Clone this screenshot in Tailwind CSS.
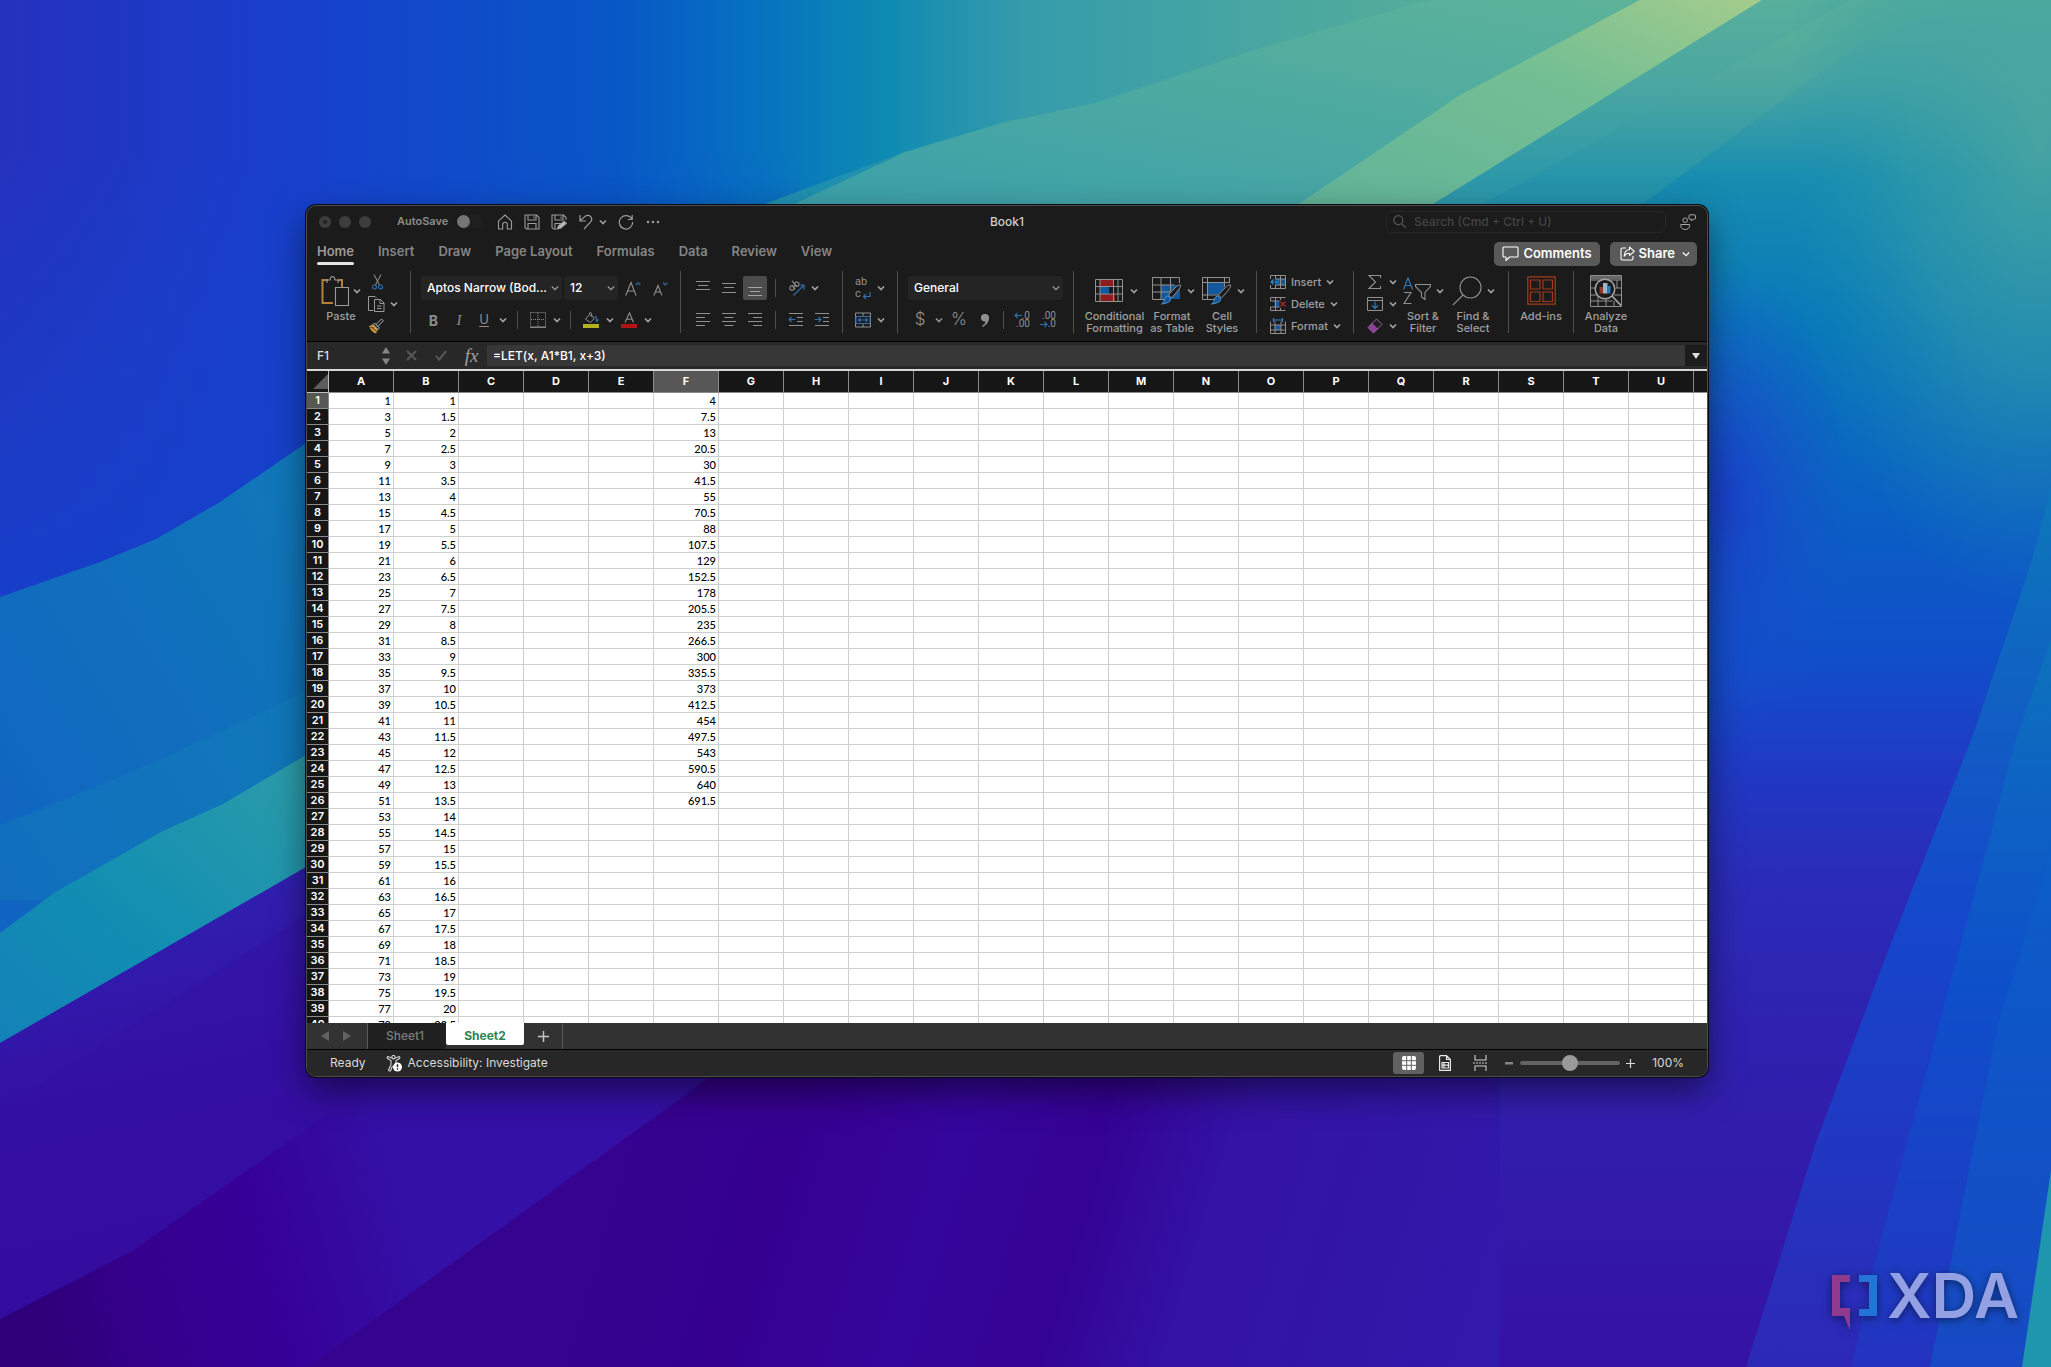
<!DOCTYPE html>
<html lang="en">
<head>
  <meta charset="UTF-8">
  <title>Book1</title>
  <meta name="viewport" content="width=device-width, initial-scale=1" />
  <script src="https://cdn.jsdelivr.net/npm/@tailwindcss/browser@4"></script>
</head>
<body class="relative h-screen overflow-hidden bg-[#2c22b0] font-['Inter','Liberation_Sans',sans-serif] text-[#a0a0a0]">

  <!-- Desktop wallpaper -->
  <svg class="absolute inset-0 h-full w-full" viewBox="0 0 2051 1367" preserveAspectRatio="none" aria-hidden="true">
    <defs>
      <linearGradient id="sky" x1="0" y1="0" x2="1" y2="0">
        <stop offset="0" stop-color="#2632be" />
        <stop offset=".15" stop-color="#1740cc" />
        <stop offset=".3" stop-color="#0857c6" />
        <stop offset=".37" stop-color="#0672c0" />
        <stop offset=".43" stop-color="#0d8ab2" />
        <stop offset=".5" stop-color="#369cab" />
        <stop offset=".7" stop-color="#55ae9a" />
        <stop offset="1" stop-color="#55ae9a" />
      </linearGradient>
      <linearGradient id="skyfade" x1="0" y1="0" x2="0" y2="1">
        <stop offset="0" stop-color="#1245cc" stop-opacity="0" />
        <stop offset="1" stop-color="#163fca" />
      </linearGradient>
      <linearGradient id="green" x1="0" y1="1" x2="1" y2="0">
        <stop offset="0" stop-color="#3a9faa" />
        <stop offset="1" stop-color="#60b598" />
      </linearGradient>
      <linearGradient id="lime" x1="0" y1="1" x2="1" y2="0">
        <stop offset="0" stop-color="#60b299" />
        <stop offset=".6" stop-color="#74bf93" />
        <stop offset="1" stop-color="#a4cc8c" />
      </linearGradient>
      <linearGradient id="right" x1="0" y1="0" x2="0" y2="1">
        <stop offset="0" stop-color="#5db299" />
        <stop offset=".06" stop-color="#48a5a2" />
        <stop offset=".13" stop-color="#178db0" />
        <stop offset=".24" stop-color="#0878ba" />
        <stop offset=".38" stop-color="#0a5ec4" />
        <stop offset=".48" stop-color="#104fca" />
        <stop offset=".56" stop-color="#1f3ac4" />
        <stop offset=".64" stop-color="#2a2cb8" />
        <stop offset=".75" stop-color="#2f22b0" />
        <stop offset="1" stop-color="#3512a4" />
      </linearGradient>
      <linearGradient id="leftblue" x1="0" y1="1" x2="1" y2="0">
        <stop offset="0" stop-color="#1160c4" />
        <stop offset="1" stop-color="#107cb6" />
      </linearGradient>
      <linearGradient id="leftteal" x1="0" y1="1" x2="1" y2="0">
        <stop offset="0" stop-color="#1480b8" />
        <stop offset=".4" stop-color="#118eb2" />
        <stop offset="1" stop-color="#319fa8" />
      </linearGradient>
      <linearGradient id="purple" x1="0" y1="0" x2=".45" y2="1">
        <stop offset="0" stop-color="#2c2ab8" />
        <stop offset=".45" stop-color="#3410a4" />
        <stop offset="1" stop-color="#350498" />
      </linearGradient>
      <linearGradient id="violet" gradientUnits="userSpaceOnUse" x1="60" y1="1367" x2="420" y2="1270">
        <stop offset="0" stop-color="#2e007a" />
        <stop offset=".3" stop-color="#36008e" />
        <stop offset=".6" stop-color="#360098" />
        <stop offset="1" stop-color="#3410a6" />
      </linearGradient>
      <linearGradient id="streak" gradientUnits="userSpaceOnUse" x1="500" y1="1200" x2="1500" y2="1500">
        <stop offset="0" stop-color="#35048f" />
        <stop offset=".25" stop-color="#350090" />
        <stop offset=".4" stop-color="#35069c" />
        <stop offset=".53" stop-color="#340294" />
        <stop offset=".66" stop-color="#3313a5" />
        <stop offset="1" stop-color="#311aac" />
      </linearGradient>
      <linearGradient id="edge1" x1="0" y1="1" x2="0" y2="0">
        <stop offset="0" stop-color="#2d28b6" />
        <stop offset=".5" stop-color="#1546cc" />
        <stop offset="1" stop-color="#0c78ba" />
      </linearGradient>
      <linearGradient id="edge2" x1="0" y1="1" x2="0" y2="0">
        <stop offset="0" stop-color="#1f38c4" />
        <stop offset=".5" stop-color="#0a54ca" />
        <stop offset="1" stop-color="#0c78ba" />
      </linearGradient>
      <radialGradient id="tealglow">
        <stop offset="0" stop-color="#4ea89f" stop-opacity=".8" />
        <stop offset=".5" stop-color="#3a9fa5" stop-opacity=".5" />
        <stop offset="1" stop-color="#1a90b0" stop-opacity="0" />
      </radialGradient>
      <radialGradient id="blueglow">
        <stop offset="0" stop-color="#1a40ca" />
        <stop offset="1" stop-color="#1a50ca" stop-opacity="0" />
      </radialGradient>
    </defs>
    <rect width="2051" height="700" fill="url(#sky)" />
    <rect y="150" width="800" height="500" fill="url(#skyfade)" />
    <path d="M760 206 905 152 1005 122 1095 103 1270 45 1430 0H1800L1430 210Z" fill="url(#green)" />
    <path d="M760 206 905 152 790 206Z" fill="#1f90b0" />
    <path d="M1290 210 1460 95 1640 0H1765L1430 210Z" fill="url(#lime)" />

    <!-- Right side -->
    <path d="M1762 0H2051V1367H1000V1060H1300L1430 206Z" fill="url(#right)" />
    <path d="M1762 0H1850L1480 206H1430Z" fill="#50a99f" opacity=".4" />
    <path d="M1960 0 1850 50 1640 206H1480L1850 0Z" fill="#6ab896" opacity=".18" />
    <ellipse cx="2040" cy="150" rx="260" ry="460" fill="url(#tealglow)" />
    <ellipse cx="1720" cy="500" rx="130" ry="240" fill="url(#blueglow)" />

    <!-- Left bands -->
    <path d="M0 597 100 562 156 539 220 502 306 443H420V1100H0Z" fill="url(#leftblue)" />
    <path d="M0 825Q170 760 306 690V900H0Z" fill="#1284b6" opacity=".35" />
    <path d="M0 933 54 893 161 832 223 804 306 755 340 740V900L0 1060Z" fill="url(#leftteal)" />
    <path d="M0 1043 306 867 400 813H1100V1367H0Z" fill="url(#purple)" />
    <path d="M0 1110 306 915 420 850V1078L0 1330Z" fill="#3410a2" opacity=".4" />

    <!-- Bottom -->
    <path d="M0 1319 134 1250 379 1078H1300V1367H0Z" fill="url(#violet)" />
    <path d="M308 1367 720 1070H1500V1367Z" fill="url(#streak)" />

    <!-- Right edge bands -->
    <path d="M2051 490 2032 560 1973 735 1888 951 1816 1142 1746 1367H2051Z" fill="url(#edge1)" />
    <path d="M2051 640 2016 740 1935 1040 1870 1280 1852 1367H2051Z" fill="url(#edge2)" opacity=".7" />
    <path d="M2051 840 2046 869 1998 1023 1937 1332 1930 1367H2051Z" fill="#0c5fc8" opacity=".5" />
    <path d="M2051 1170 2022 1367H2051Z" fill="#1d96ae" />
  </svg>

  <!-- Shared icons -->
  <svg class="hidden" aria-hidden="true">
    <symbol id="chev" viewBox="0 0 8 8"><path d="M1 2.5 4 5.5 7 2.5" fill="none" stroke="currentColor" stroke-width="1.7" /></symbol>
    <symbol id="thin-chev" viewBox="0 0 8 8"><path d="M.8 2.5 4 5.7 7.2 2.5" fill="none" stroke="currentColor" stroke-width="1.1" /></symbol>
  </svg>

  <main class="relative flex h-full flex-col pt-[205px] pr-[343px] pb-[290px] pl-[306px]">
    <div class="flex min-h-0 flex-1 flex-col overflow-hidden rounded-[10px] border border-[#4c4c4c] bg-[#1b1b1b] shadow-[0_0_0_1px_#0a0a14,0_14px_34px_rgba(0,0,0,0.5)]">

      <!-- Title bar -->
      <header class="grid h-[31px] shrink-0 grid-cols-[1fr_auto_1fr] items-center">
        <div class="flex items-center pl-3">
          <div class="flex gap-2">
            <button aria-label="Close" class="grid size-3 place-items-center rounded-full bg-[#3d3d3d]"><span class="size-1 rounded-full bg-[#222]"></span></button>
            <button aria-label="Minimize" class="size-3 rounded-full bg-[#3d3d3d]"></button>
            <button aria-label="Zoom" class="size-3 rounded-full bg-[#3d3d3d]"></button>
          </div>
          <label for="autosave" class="ml-[26px] text-[11px] font-semibold text-[#8c8c8c]">AutoSave</label>
          <input id="autosave" type="checkbox" class="ml-[9px] h-[13px] w-[26px] appearance-none rounded-full bg-[#1f1f1f] before:block before:size-[13px] before:rounded-full before:bg-[#757575]" />
          <div class="ml-2 flex items-center text-[#9a9a9a]">
            <button aria-label="Home" class="grid w-[27px] place-items-center">
              <svg class="size-4" viewBox="0 0 16 16" fill="none" stroke="currentColor" stroke-width="1.1"><path d="M1.5 7.2 8 1l6.500 6.200V15H10.300V10.500a2.300 2.300 0 0 0-4.600 0V15H1.500Z" stroke-linejoin="round" /></svg>
            </button>
            <button aria-label="Save" class="grid w-[27px] place-items-center">
              <svg class="size-4" viewBox="0 0 16 16" fill="none" stroke="currentColor" stroke-width="1.1"><path d="M1 1h11.500L15 3.500V15H2.500L1 13.500ZM4 1v5h8V1M4 15V9.500h8V15M10 2.500v2" /></svg>
            </button>
            <button aria-label="Save as" class="grid w-[27px] place-items-center">
              <svg class="size-4" viewBox="0 0 16 16" fill="none" stroke="currentColor" stroke-width="1.1"><path d="M5.500 15H2.500L1 13.500V1h11.500L15 3.500V6M4 1v5h8V1M4 15V9.500h6M10 2.500v2" /><path d="m6.500 15 .8-3L13 7.200l2.500 2L10 14Z" fill="#bdbdbd" /></svg>
            </button>
            <button aria-label="Undo" class="grid w-[27px] place-items-center">
              <svg class="size-4" viewBox="0 0 16 16" fill="none" stroke="currentColor" stroke-width="1.200"><path d="M2 1v6h6M2.200 6.800 7 2.400c2-1.800 5-1.200 6.200.8 1 1.800.5 3.600-.8 4.900L6 15" /></svg>
            </button>
            <button aria-label="Undo history" class="w-[10px]"><svg class="size-2"><use href="#chev" /></svg></button>
            <button aria-label="Redo" class="ml-[3px] grid w-[27px] place-items-center">
              <svg class="size-4" viewBox="0 0 16 16" fill="none" stroke="currentColor" stroke-width="1.200"><path d="M14.200 1v4.500H9.800M14 5.300A6.700 6.700 0 1 0 14.700 8" /></svg>
            </button>
            <button aria-label="More" class="grid w-[27px] place-items-center">
              <svg class="h-1 w-[14px]" viewBox="0 0 14 4" fill="currentColor"><circle cx="2" cy="2" r="1.300" /><circle cx="7" cy="2" r="1.300" /><circle cx="12" cy="2" r="1.300" /></svg>
            </button>
          </div>
        </div>
        <h1 class="text-[12px] font-medium text-[#cfcfcf]">Book1</h1>
        <div class="flex items-center justify-end gap-[14px] pr-[11px]">
          <label class="flex h-[22px] w-[280px] items-center gap-2 rounded-[5px] border border-[#272727] px-[6px] text-[#5e5e5e]">
            <svg class="size-[13px] shrink-0" viewBox="0 0 13 13" fill="none" stroke="currentColor" stroke-width="1.100"><circle cx="5.300" cy="5.300" r="4.500" /><path d="m8.600 8.600 4 4" /></svg>
            <input type="search" aria-label="Search" placeholder="Search (Cmd + Ctrl + U)" class="w-full bg-transparent text-[12px] font-medium outline-none placeholder:text-[#434343]" />
          </label>
          <button aria-label="Account" class="text-[#a8a8a8]">
            <svg class="size-4" viewBox="0 0 16 16" fill="none" stroke="currentColor" stroke-width="1"><circle cx="5.200" cy="6.200" r="2.300" /><path d="M.8 10.500h8.800v1.200c0 2.400-2 3.800-4.400 3.800S.8 14.100.8 11.700ZM10 .8h4.500q1 0 1 1v2.400q0 1-1 1h-1.300l-1.700 1.600V5.200H10q-1 0-1-1V1.800q0-1 1-1Z" /></svg>
          </button>
        </div>
      </header>

      <!-- Ribbon tabs -->
      <div class="flex h-[30px] shrink-0 items-center justify-between pr-[10px] pl-[10px]">
        <nav class="flex h-full items-center gap-6 text-[13px] font-semibold text-[#858585]">
          <a href="#" class="relative text-[#9a9a9a] after:absolute after:inset-x-0 after:top-5 after:h-[3px] after:rounded-full after:bg-[#e4e4e4]">Home</a>
          <a href="#">Insert</a>
          <a href="#">Draw</a>
          <a href="#">Page Layout</a>
          <a href="#">Formulas</a>
          <a href="#">Data</a>
          <a href="#">Review</a>
          <a href="#">View</a>
        </nav>
        <div class="flex gap-[10px] pt-[3px] text-[13px] font-semibold text-white">
          <button class="flex h-6 items-center gap-1 rounded-[5px] bg-[#595959] px-2">
            <svg class="size-[17px]" viewBox="0 0 17 17" fill="none" stroke="currentColor" stroke-width="1.100"><path d="M2 2h13q1 0 1 1v8q0 1-1 1H7.500L4 15.500V12H2q-1 0-1-1V3q0-1 1-1Z" stroke-linejoin="round" /></svg>
            Comments
          </button>
          <button class="flex h-6 items-center gap-1 rounded-[5px] bg-[#595959] pr-[7px] pl-[10px]">
            <svg class="size-[15px]" viewBox="0 0 15 15" fill="none" stroke="currentColor" stroke-width="1.100" stroke-linejoin="round"><path d="M6 2H2.500Q1 2 1 3.500v9Q1 14 2.500 14h9q1.500 0 1.500-1.500V10M9.500 1 14.300 5.300 9.500 9.500V7.200C7 7.200 5.500 8 4.200 10.200 4.400 6.500 6.500 3.800 9.500 3.500Z" /></svg>
            Share
            <svg class="ml-[3px] size-2"><use href="#thin-chev" /></svg>
          </button>
        </div>
      </div>

      <!-- Ribbon -->
      <div class="flex h-[74px] shrink-0 overflow-hidden pt-1 text-[11px] font-medium whitespace-nowrap text-[#a0a0a0]">

        <section aria-label="Clipboard" class="flex h-[66px] w-[103px] shrink-0 gap-[7px] pl-[14px]">
          <button class="flex w-10 flex-col items-center leading-3">
            <span class="flex h-[39px] items-center gap-1">
              <svg class="h-8 w-[28px]" viewBox="0 0 28 32" fill="none"><path d="M7 5H1.500V28H12M17 5h4V13" stroke="#b5803a" stroke-width="2" /><path d="M6 8V5h3q.3-3.500 2.500-3.500T14 5h3v3" stroke="#999" stroke-width="1.100" /><path d="M14.500 12.500H27.500V30.500H14.500Z" stroke="#999" stroke-width="1.100" /></svg>
              <svg class="size-2"><use href="#chev" /></svg>
            </span>
            Paste
          </button>
          <div class="flex flex-col">
            <button aria-label="Cut" class="flex h-[22px] items-center pl-1">
              <svg class="h-4 w-[11px]" viewBox="0 0 11 16" fill="none"><path d="M2 .5 7.500 11M9 .5 3.500 11" stroke="#999" /><circle cx="2.500" cy="13" r="2" stroke="#2f6ea8" stroke-width="1.200" /><circle cx="8.500" cy="13" r="2" stroke="#2f6ea8" stroke-width="1.200" /></svg>
            </button>
            <button aria-label="Copy" class="flex h-[22px] items-center gap-[5px]">
              <svg class="h-4 w-[17px]" viewBox="0 0 17 16" fill="none" stroke="#999"><path d="M5.500 14.500h-5V.5H7l1.500 1.500" /><path d="M6.500 3.500h6l3.500 3.500v8.500H6.500ZM12 3.500V7.500h4M9 10h4.500M9 12.500h4.500" /></svg>
              <svg class="size-2"><use href="#chev" /></svg>
            </button>
            <button aria-label="Format painter" class="flex h-[22px] items-center">
              <svg class="size-4" viewBox="0 0 16 16" fill="none"><path d="m1 8 4-1.500 5 5L8 15.500Q3 14 1 8Z" fill="#c79a3c" /><path d="m4 10 5 3.500M2 9l4 1" stroke="#7c3b1c" /><path d="M5 6.500 6.500 5l5 5L10 11.500ZM8 6.500 13.500 1l1.800 1.800L10 8.500Z" stroke="#aaa" /></svg>
            </button>
          </div>
        </section>
        <div class="h-[62px] w-px shrink-0 bg-[#4d4d4d]"></div>

        <section aria-label="Font" class="flex w-[269px] shrink-0 flex-col gap-2 pt-[5px] pl-[10px]">
          <div class="flex h-6 items-center gap-[2px] text-[12px] text-white">
            <div class="relative">
              <select aria-label="Font name" class="h-6 w-[141px] appearance-none rounded-[3px] bg-[#242424] pl-[6px] font-medium"><option>Aptos Narrow (Bod...</option></select>
              <svg class="absolute top-2 right-[3px] size-2 text-[#a0a0a0]"><use href="#thin-chev" /></svg>
            </div>
            <div class="relative">
              <select aria-label="Font size" class="h-6 w-[54px] appearance-none rounded-[3px] bg-[#242424] pl-[6px] font-medium"><option>12</option></select>
              <svg class="absolute top-2 right-[3px] size-2 text-[#a0a0a0]"><use href="#thin-chev" /></svg>
            </div>
            <button aria-label="Increase font size" class="grid w-[26px] place-items-center"><svg class="h-[15px] w-4" viewBox="0 0 16 15" fill="none"><path d="M.8 14.500 6 1.500l5 13M2.700 10H9.300" stroke="#909090" stroke-width="1.100" /><path d="m11 4 2.200-2.300L15.400 4" stroke="#2f6ea8" stroke-width="1.200" /></svg></button>
            <button aria-label="Decrease font size" class="grid w-6 place-items-center"><svg class="h-[15px] w-4" viewBox="0 0 16 15" fill="none"><path d="M1.800 14.500 6 4.500l4 10M3.300 11H8.700" stroke="#909090" stroke-width="1.100" /><path d="m11 1.700 2.200 2.300 2.200-2.300" stroke="#2f6ea8" stroke-width="1.200" /></svg></button>
          </div>
          <div class="flex h-6 items-center">
            <button class="w-[25px] text-[14px] font-bold text-[#8c8c8c]">B</button>
            <button class="w-[26px] font-['Liberation_Serif',serif] text-[15px] text-[#8c8c8c] italic">I</button>
            <button class="w-6 text-[13px] font-normal text-[#8c8c8c] underline underline-offset-2">U</button>
            <button aria-label="Underline styles" class="grid w-[14px] place-items-center"><svg class="size-2"><use href="#chev" /></svg></button>
            <span class="mx-[7px] h-[18px] w-px bg-[#4d4d4d]"></span>
            <button aria-label="Borders" class="grid w-[26px] place-items-center"><svg class="size-4" viewBox="0 0 16 16" fill="none" stroke="#909090"><path d="M.5.5h15v14M.5.5v14M8 1v14M1 7.500h14" stroke-dasharray="1 1" /><path d="M0 15.200h16" stroke-width="1.400" /></svg></button>
            <button aria-label="Border styles" class="grid w-3 place-items-center"><svg class="size-2"><use href="#chev" /></svg></button>
            <span class="mx-[7px] h-[18px] w-px bg-[#4d4d4d]"></span>
            <button aria-label="Fill color" class="grid w-[26px] place-items-center"><svg class="size-4" viewBox="0 0 16 16" fill="none"><path d="M0 12h16v4H0Z" fill="#b5b01e" /><path d="M6.500 2.500 11.500 6 7.500 10.500 2.500 7.200ZM6.500 2.500V.8q1.500-1 2 .5l.3 3.500" stroke="#909090" /><path d="M12 4q2 1 2 5M12.500 7.500 14 9.500 15.500 7.500" stroke="#2f6ea8" stroke-width="1.200" /></svg></button>
            <button aria-label="Fill colors" class="grid w-3 place-items-center"><svg class="size-2"><use href="#chev" /></svg></button>
            <button aria-label="Font color" class="grid w-[26px] place-items-center"><svg class="size-4" viewBox="0 0 16 16" fill="none"><path d="M0 12h16v4H0Z" fill="#b31515" /><path d="M4 10.500 8.500.8l4 9.700M5.500 7.200h5.800" stroke="#909090" stroke-width="1.100" /></svg></button>
            <button aria-label="Font colors" class="grid w-3 place-items-center"><svg class="size-2"><use href="#chev" /></svg></button>
          </div>
        </section>
        <div class="h-[62px] w-px shrink-0 bg-[#4d4d4d]"></div>

        <section aria-label="Alignment" class="flex w-[161px] shrink-0 flex-col gap-2 pt-[5px] pl-[9px]">
          <div class="flex h-6 items-center">
            <button aria-label="Top align" class="grid h-6 w-[26px] place-items-center"><svg class="size-4" viewBox="0 0 16 16" stroke="#909090"><path d="M1 1.500h14M3 5.500h10M1 9.500h14" /></svg></button>
            <button aria-label="Middle align" class="grid h-6 w-[26px] place-items-center"><svg class="size-4" viewBox="0 0 16 16" stroke="#909090"><path d="M1 3.500h14M3 7.500h10M1 12.500h14" /></svg></button>
            <button aria-label="Bottom align" class="mx-px grid size-6 place-items-center rounded-[2px] bg-[#4c4c4c]"><svg class="size-4" viewBox="0 0 16 16" stroke="#a5a5a5"><path d="M1 7.500h14M3 11.500h10M1 15.500h14" /></svg></button>
            <span class="mx-[7px] h-[18px] w-px bg-[#4d4d4d]"></span>
            <button aria-label="Orientation" class="grid w-[26px] place-items-center"><svg class="size-[17px]" viewBox="0 0 17 17" fill="none"><g stroke="#909090" stroke-width="1.100"><circle cx="4" cy="8" r="2.200" /><path d="m3.800 5 3.500 4.500M4 .8l5 5.800" /><circle cx="8.800" cy="4.200" r="2.200" /></g><path d="M5.500 15.500 15.500 5.500M11.500 5h4.500v4.500" stroke="#2f6ea8" stroke-width="1.200" /></svg></button>
            <button aria-label="Orientations" class="grid w-3 place-items-center"><svg class="size-2"><use href="#chev" /></svg></button>
          </div>
          <div class="flex h-6 items-center">
            <button aria-label="Align left" class="grid w-[26px] place-items-center"><svg class="size-4" viewBox="0 0 16 16" stroke="#909090"><path d="M1 1.500h14M1 5.500h9M1 9.500h14M1 13.500h9" /></svg></button>
            <button aria-label="Center" class="grid w-[26px] place-items-center"><svg class="size-4" viewBox="0 0 16 16" stroke="#909090"><path d="M1 1.500h14M3.500 5.500h9M1 9.500h14M3.500 13.500h9" /></svg></button>
            <button aria-label="Align right" class="grid w-[26px] place-items-center"><svg class="size-4" viewBox="0 0 16 16" stroke="#909090"><path d="M1 1.500h14M6 5.500h9M1 9.500h14M6 13.500h9" /></svg></button>
            <span class="mx-[7px] h-[18px] w-px bg-[#4d4d4d]"></span>
            <button aria-label="Decrease indent" class="grid w-[26px] place-items-center"><svg class="size-4" viewBox="0 0 16 16" fill="none"><path d="M1 1.500h14M9 5.500h6M9 9.500h6M1 13.500h14" stroke="#909090" /><path d="M7.500 7.500H1M3.500 5 1 7.500 3.500 10" stroke="#2f6ea8" stroke-width="1.200" /></svg></button>
            <button aria-label="Increase indent" class="grid w-[26px] place-items-center"><svg class="size-4" viewBox="0 0 16 16" fill="none"><path d="M1 1.500h14M9 5.500h6M9 9.500h6M1 13.500h14" stroke="#909090" /><path d="M.5 7.500H7M4.500 5 7 7.500 4.500 10" stroke="#2f6ea8" stroke-width="1.200" /></svg></button>
          </div>
        </section>
        <div class="h-[62px] w-px shrink-0 bg-[#4d4d4d]"></div>

        <section aria-label="Wrap and merge" class="flex w-[54px] shrink-0 flex-col gap-2 pt-[5px] pl-3">
          <div class="flex h-6 items-center gap-[6px]">
            <button aria-label="Wrap text" class="relative h-6 w-4 text-left font-['Roboto',sans-serif] text-[11px] leading-3 font-normal text-[#909090]"><span class="block">ab</span><span class="block">c</span><svg class="absolute right-0 bottom-0 h-2 w-[9px]" viewBox="0 0 9 8" fill="none" stroke="#2f6ea8" stroke-width="1.200"><path d="M8 0v4.500H1.500M4 2 1.500 4.500 4 7" /></svg></button>
            <button aria-label="Wrap options"><svg class="size-2"><use href="#chev" /></svg></button>
          </div>
          <div class="flex h-6 items-center gap-[6px]">
            <button aria-label="Merge and center"><svg class="size-4" viewBox="0 0 16 16" fill="none"><path d="M.5 1h15v14H.5ZM8 1v3M8 12v3" stroke="#909090" /><path d="M1 4.500h14v7H1ZM3.500 8h9M5.500 6l-2 2 2 2M10.500 6l2 2-2 2" stroke="#2f6ea8" stroke-width="1.200" /></svg></button>
            <button aria-label="Merge options"><svg class="size-2"><use href="#chev" /></svg></button>
          </div>
        </section>
        <div class="h-[62px] w-px shrink-0 bg-[#4d4d4d]"></div>

        <section aria-label="Number" class="flex w-[175px] shrink-0 flex-col gap-2 pt-[5px] pl-[10px]">
          <div class="relative h-6 w-[155px] text-[12px] text-white">
            <select aria-label="Number format" class="h-6 w-full appearance-none rounded-[3px] bg-[#242424] pl-[6px] font-medium"><option>General</option></select>
            <svg class="absolute top-2 right-[3px] size-2 text-[#a0a0a0]"><use href="#thin-chev" /></svg>
          </div>
          <div class="flex h-6 items-center text-[#909090]">
            <button aria-label="Currency" class="w-6 text-[17px] font-light">$</button>
            <button aria-label="Currencies" class="grid w-[14px] place-items-center"><svg class="size-2"><use href="#chev" /></svg></button>
            <button aria-label="Percent" class="w-[26px] text-[17px] font-light">%</button>
            <button aria-label="Comma style" class="grid w-[26px] place-items-center"><svg class="h-[13px] w-2" viewBox="0 0 8 13" fill="currentColor"><path d="M4 0a3.700 3.700 0 0 1 4 4c0 4-2.500 7-6.500 9L1 12c2-1.200 3.200-2.500 3.500-4.500A3.800 3.800 0 1 1 4 0Z" /></svg></button>
            <span class="mx-[5px] h-[18px] w-px bg-[#4d4d4d]"></span>
            <button aria-label="Increase decimal" class="relative w-[26px] pr-[5px] text-right font-['Roboto',sans-serif] text-[10px] leading-2 font-normal">.0<br>.00<svg class="absolute top-0 left-[5px] h-[7px] w-2" viewBox="0 0 8 7" fill="none" stroke="#2f6ea8" stroke-width="1.200"><path d="M8 3.500H1M3.500 1 1 3.500 3.500 6" /></svg></button>
            <button aria-label="Decrease decimal" class="relative w-[26px] pr-[5px] text-right font-['Roboto',sans-serif] text-[10px] leading-2 font-normal">.00<br>.0<svg class="absolute bottom-0 left-[5px] h-[7px] w-2" viewBox="0 0 8 7" fill="none" stroke="#2f6ea8" stroke-width="1.200"><path d="M0 3.500h7M4.500 1 7 3.500 4.500 6" /></svg></button>
          </div>
        </section>
        <div class="h-[62px] w-px shrink-0 bg-[#4d4d4d]"></div>

        <section aria-label="Styles" class="flex w-[182px] shrink-0 gap-2 pl-3">
          <button class="flex w-[57px] flex-col items-center leading-3">
            <span class="flex h-[39px] items-center gap-[7px] pl-[3px]">
              <svg class="h-[23px] w-7" viewBox="0 0 28 23"><path d="M5 .5h13v7H5ZM5 15h15v7.500H5Z" fill="#8c1d1d" /><path d="M5 7.500h9V15H5Z" fill="#14589c" /><path d="M.5.500h27v22H.500ZM5 .5v22M18.500.5v22M23 .5v22M.5 7.500h27M.5 15h27" fill="none" stroke="#909090" /></svg>
              <svg class="size-2"><use href="#chev" /></svg>
            </span>
            Conditional<br>Formatting
          </button>
          <button class="flex w-[42px] flex-col items-center leading-3">
            <span class="flex h-[39px] items-center gap-[5px] pl-[3px]">
              <svg class="h-7 w-[30px]" viewBox="0 0 30 28" fill="none"><path d="M9 8h19v14H9Z" fill="#14589c" /><path d="M14 22.500H.5V.5h27V6M.5 8h22M.5 15H18M9 .5v22M18.500.5v14" stroke="#909090" /><path d="M28.500 8q2 1-9 13l-3-3q10-12 12-10Z" fill="#1b1b1b" stroke="#909090" /><path d="M15.500 19q4 1 3 4t-9 4q3-2 3-4.500t3-3.500Z" fill="#14589c" stroke="#4b93cc" /></svg>
              <svg class="size-2"><use href="#chev" /></svg>
            </span>
            Format<br>as Table
          </button>
          <button class="flex w-[42px] flex-col items-center leading-3">
            <span class="flex h-[39px] items-center gap-[5px] pl-[3px]">
              <svg class="h-7 w-[30px]" viewBox="0 0 30 28" fill="none"><path d="M5.500 5.500h17v12h-17Z" fill="#14589c" /><path d="M14 22.500H.5V.5h27V6M.5 5.500h27M5.500.5v22M.5 18H16M22.500.5V10" stroke="#909090" /><path d="M28.500 8q2 1-9 13l-3-3q10-12 12-10Z" fill="#1b1b1b" stroke="#909090" /><path d="M15.500 19q4 1 3 4t-9 4q3-2 3-4.500t3-3.500Z" fill="#14589c" stroke="#4b93cc" /></svg>
              <svg class="size-2"><use href="#chev" /></svg>
            </span>
            Cell<br>Styles
          </button>
        </section>
        <div class="h-[62px] w-px shrink-0 bg-[#4d4d4d]"></div>

        <section aria-label="Cells" class="w-24 shrink-0 pl-[13px]">
          <button class="flex h-[22px] items-center gap-[5px]">
            <svg class="h-[14px] w-4" viewBox="0 0 16 14" fill="none"><path d="M5 4h11v6H5Z" fill="#14589c" /><path d="M.5 4V.5h15v13H.5V10M5.500.5V4M10.500.5v13M5.500 10v3.500M5.500 4h10M5.500 10h10" stroke="#909090" /><path d="M9 7H1M3.500 4.500 1 7l2.500 2.500" stroke="#3b86c6" stroke-width="1.200" /></svg>
            Insert
            <svg class="size-2"><use href="#chev" /></svg>
          </button>
          <button class="flex h-[22px] items-center gap-[5px]">
            <svg class="h-[14px] w-4" viewBox="0 0 16 14" fill="none"><path d="M4.500 4.500h5v5h-5Z" fill="#14589c" /><path d="M.5 4V.5h15M.5 10v3.500h15M5.500.5v13M10.500.5V3M10.500 11v2.500M.5 4h9M.5 10h9" stroke="#909090" /><path d="m10.500 4.500 5 5M15.500 4.500l-5 5" stroke="#b52525" stroke-width="1.200" /></svg>
            Delete
            <svg class="size-2"><use href="#chev" /></svg>
          </button>
          <button class="flex h-[22px] items-center gap-[5px]">
            <svg class="h-4 w-4" viewBox="0 0 16 16" fill="none"><path d="M5 7h6v5H5Z" fill="#14589c" /><path d="M.5 3.500v12h15v-12M5 3.500v12M11 3.500v12M.5 7h15M.5 12h15" stroke="#909090" /><path d="M3.500 0v4M12.500 0v4M3.500 2h9" stroke="#3b86c6" stroke-width="1.200" /></svg>
            Format
            <svg class="size-2"><use href="#chev" /></svg>
          </button>
        </section>
        <div class="h-[62px] w-px shrink-0 bg-[#4d4d4d]"></div>

        <section aria-label="Editing" class="flex w-[154px] shrink-0 pl-[13px]">
          <div class="flex w-8 flex-col">
            <button aria-label="AutoSum" class="flex h-[22px] items-center gap-[6px]"><svg class="size-4" viewBox="0 0 16 16" fill="none" stroke="#909090" stroke-width="1.100"><path d="M13.500 4V1.500H2L8.500 8 2 14.500H13.500V12" /></svg><svg class="size-2"><use href="#chev" /></svg></button>
            <button aria-label="Fill" class="flex h-[22px] items-center gap-[6px]"><svg class="size-4" viewBox="0 0 16 16" fill="none"><path d="M.5 1.500h15v13H.5ZM.5 4.500h15" stroke="#909090" /><path d="M8 5.500v7M5 9.500l3 3 3-3" stroke="#2f7ab8" stroke-width="1.200" /></svg><svg class="size-2"><use href="#chev" /></svg></button>
            <button aria-label="Clear" class="flex h-[22px] items-center gap-[6px]"><svg class="size-4" viewBox="0 0 16 16" fill="none"><path d="M1 9.500 5 5.500 10.500 11 6.500 15Z" fill="#8d3f9a" /><path d="M1 9.500 9.500 1 15 6.500 6.500 15ZM5 5.500 10.500 11" stroke="#a05aac" /></svg><svg class="size-2"><use href="#chev" /></svg></button>
          </div>
          <button class="flex w-12 flex-col items-center leading-3">
            <span class="flex h-[39px] items-center gap-[5px]">
              <svg class="h-[28px] w-[28px]" viewBox="0 0 28 28" fill="none"><path d="M.5 12.500 5 .8l4.500 11.700M2.200 8.500h5.600" stroke="#2f7ab8" stroke-width="1.200" /><path d="M1 15.500H8L1 26.500H8.500M12.500 7.500h15v2L22 15.500v7l-3.500-2.500v-4.500l-6-6Z" stroke="#909090" stroke-width="1.100" /></svg>
              <svg class="size-2"><use href="#chev" /></svg>
            </span>
            Sort &amp;<br>Filter
          </button>
          <button class="ml-[2px] flex w-12 flex-col items-center leading-3">
            <span class="flex h-[39px] items-center gap-[5px]">
              <svg class="size-[30px]" viewBox="0 0 30 30" fill="none" stroke="#909090" stroke-width="1.100"><circle cx="18.500" cy="11.500" r="10.500" /><path d="M11 19 .8 29.200" /></svg>
              <svg class="size-2"><use href="#chev" /></svg>
            </span>
            Find &amp;<br>Select
          </button>
        </section>
        <div class="h-[62px] w-px shrink-0 bg-[#4d4d4d]"></div>

        <section class="flex w-16 shrink-0 justify-center">
          <button class="flex flex-col items-center leading-3">
            <span class="flex h-[39px] items-center">
              <svg class="size-[29px]" viewBox="0 0 29 29" fill="none" stroke="#a33a1e" stroke-width="1.200"><path d="M.8.800h27.400v27.400H.8ZM3.500 4h9.500v9H3.500ZM16 4h9.500v9H16ZM3.500 16h9.500v9.500H3.500ZM16 16h9.500v9.500H16Z" /></svg>
            </span>
            Add-ins
          </button>
        </section>
        <div class="h-[62px] w-px shrink-0 bg-[#4d4d4d]"></div>

        <section class="flex w-16 shrink-0 justify-center">
          <button class="flex flex-col items-center leading-3">
            <span class="flex h-[39px] items-center">
              <svg class="size-8" viewBox="0 0 32 32" fill="none"><path d="M.5.500h31v31H.5ZM.5 5h31M8 20v11.500M16 24v7.500M24 26v5.500M.5 13h5M.5 20h8M.5 26h22M26 13h5.500M24 20h7.500M27 5v8" stroke="#909090" /><path d="M1 1h30v3.500H1Z" fill="#666" /><circle cx="15" cy="14" r="9.800" fill="#1b1b1b" stroke="#a5a5a5" stroke-width="1.500" /><path d="m22 21 9 9.500" stroke="#a5a5a5" stroke-width="1.800" /><path d="M9.500 12h3.500v6.500H9.500Z" fill="#8c3a2a" /><path d="M13 8h4.500v10.500H13Z" fill="#9ab4cc" /><path d="M17.500 11h3v7.500h-3Z" fill="#2f7ab8" /></svg>
            </span>
            Analyze<br>Data
          </button>
        </section>
      </div>

      <!-- Formula bar -->
      <div class="flex h-7 shrink-0 items-stretch border-t border-black bg-[#282828] pt-[3px] pb-[3px]">
        <input aria-label="Name box" value="F1" class="w-[72px] bg-transparent pl-[10px] text-[12px] font-medium text-[#dcdcdc] outline-none" />
        <button aria-label="Name box list" class="grid w-[14px] place-items-center">
          <svg class="h-[18px] w-2" viewBox="0 0 8 18" fill="#868686"><path d="M4 0 8 6.500H0ZM4 18 0 11.500H8Z" /></svg>
        </button>
        <div class="ml-[3px] flex">
          <button aria-label="Cancel" class="grid w-[30px] place-items-center"><svg class="size-[11px]" viewBox="0 0 11 11" stroke="#555" stroke-width="2.200"><path d="m1 1 9 9M10 1l-9 9" /></svg></button>
          <button aria-label="Enter" class="grid w-[30px] place-items-center"><svg class="h-[11px] w-3" viewBox="0 0 12 11" fill="none" stroke="#555" stroke-width="2.200"><path d="m.8 6 3.500 3.500L11.200 1" /></svg></button>
          <button aria-label="Insert function" class="w-[31px] font-['Liberation_Serif',serif] text-[19px] leading-[20px] text-[#a0a0a0] italic">fx</button>
        </div>
        <input aria-label="Formula" value="=LET(x, A1*B1, x+3)" class="min-w-0 flex-1 bg-[#373737] pl-[6px] text-[12px] font-medium text-white outline-none" />
        <button aria-label="Expand formula bar" class="grid w-[22px] place-items-center bg-[#1c1c1c]"><svg class="h-[6px] w-2" viewBox="0 0 8 6" fill="#dedede"><path d="M0 0h8L4 6Z" /></svg></button>
      </div>

      <!-- Cell grid -->
      <div class="min-h-0 flex-1 overflow-hidden border-t-2 border-[#d6d6d6] bg-white">
        <table class="w-full table-fixed border-separate border-spacing-0 font-['Lato','Liberation_Sans',sans-serif]">
          <colgroup id="cols"><col class="w-[22px]"></colgroup>
          <thead>
            <tr id="head" class="h-[22px] bg-[#161616] font-['Inter',sans-serif] text-[11px] leading-[21px] font-semibold text-white">
              <th class="border-r border-b border-[#bdbdbd] p-0"><svg class="ml-auto size-[15px]" viewBox="0 0 15 15" fill="#5c5c5c"><path d="M15 0V15H0Z" /></svg></th>
            </tr>
          </thead>
          <tbody id="rows" class="text-right text-[11px] leading-[15px] font-medium text-black"></tbody>
        </table>
      </div>

      <!-- Sheet tabs -->
      <footer class="shrink-0">
        <div class="flex h-[27px] items-start border-b border-black bg-[#323232] text-[12px] font-medium">
          <div class="flex h-[26px] w-[60px] items-center gap-[14px] pl-[14px]">
            <button aria-label="Previous sheet"><svg class="h-[10px] w-2" viewBox="0 0 8 10" fill="#616161"><path d="M8 0V10L0 5Z" /></svg></button>
            <button aria-label="Next sheet"><svg class="h-[10px] w-2" viewBox="0 0 8 10" fill="#616161"><path d="M0 0V10L8 5Z" /></svg></button>
          </div>
          <button class="h-[26px] w-[79px] border-l border-[#5a5a5a] bg-[#202020] pr-1 text-[#7d7d7d]">Sheet1</button>
          <button class="h-[22px] w-[78px] rounded-b-[2px] bg-white pt-[3px] font-bold text-[#2e8352]">Sheet2</button>
          <button aria-label="New sheet" class="grid h-[26px] w-[39px] place-items-center border-r border-[#5a5a5a]"><svg class="size-[11px]" viewBox="0 0 11 11" stroke="#c4c4c4" stroke-width="1.500"><path d="M5.500 0v11M0 5.500h11" /></svg></button>
        </div>

        <!-- Status bar -->
        <div class="flex h-[26px] items-center justify-between bg-[#272727] pr-[23px] pl-[23px] text-[12px] text-[#dadada]">
          <div class="flex items-center">
            <span>Ready</span>
            <button class="ml-5 flex items-center gap-[5px]">
              <svg class="size-[17px]" viewBox="0 0 17 17" fill="none" stroke="#dadada" stroke-width="1.100"><circle cx="7.500" cy="2.200" r="1.700" /><path d="M5.500 3 2 1.500Q.5 2.500 1.500 3.500L5 5.500v4L2.500 15q.5 1.500 2 .8L6.500 11M9.500 3 13 1.500q1.500 1 .5 2L10 5.500V8" /><circle cx="11.500" cy="12" r="4.500" fill="#fff" stroke="none" /><path d="M11.500 9.300v3M11.500 13.300v1.400" stroke="#222" stroke-width="1.400" /></svg>
              Accessibility: Investigate
            </button>
          </div>
          <div class="flex items-center">
            <button aria-label="Normal view" class="grid h-[22px] w-[31px] place-items-center rounded-[3px] bg-[#616161]"><svg class="size-[14px]" viewBox="0 0 14 14"><rect width="14" height="14" rx="2" fill="#fff" /><path d="M4.700 0v14M9.300 0v14M0 4.700h14M0 9.300h14" stroke="#616161" /></svg></button>
            <button aria-label="Page layout view" class="ml-[15px]"><svg class="h-4 w-3" viewBox="0 0 12 16" fill="none" stroke="#e8e8e8" stroke-width="1.200"><path d="M1.600.6H7.500L11.400 4.500V15.400H.6V1.600q0-1 1-1ZM7.500.6V4.500H11.400M3 7.500h6.500v5.500H3ZM5 7.500v5.500M3 10.200h6.500" /></svg></button>
            <button aria-label="Page break preview" class="ml-[22px]"><svg class="h-4 w-[15px]" viewBox="0 0 15 16" fill="none" stroke="#cfcfcf" stroke-width="1.100"><path d="M2 0v5h11V0M2 16v-5h11v5" /><path d="M0 8h15" stroke-dasharray="2 1" /></svg></button>
            <button aria-label="Zoom out" class="ml-[17px]"><svg class="h-[3px] w-2" viewBox="0 0 8 3" fill="#858585"><path d="M0 0h8v2.500H0Z" /></svg></button>
            <input type="range" aria-label="Zoom" min="0" max="100" value="50" class="ml-[7px] h-4 w-[100px] appearance-none bg-transparent [&::-webkit-slider-runnable-track]:h-1 [&::-webkit-slider-runnable-track]:rounded-full [&::-webkit-slider-runnable-track]:bg-[#636363] [&::-webkit-slider-thumb]:-mt-[6px] [&::-webkit-slider-thumb]:size-4 [&::-webkit-slider-thumb]:appearance-none [&::-webkit-slider-thumb]:rounded-full [&::-webkit-slider-thumb]:bg-[#9a9a9a]" />
            <button aria-label="Zoom in" class="ml-[6px]"><svg class="size-[9px]" viewBox="0 0 9 9" stroke="#dadada" stroke-width="1.200"><path d="M4.500 0v9M0 4.500h9" /></svg></button>
            <output class="ml-[17px]">100%</output>
          </div>
        </div>
      </footer>
    </div>
  </main>

  <!-- Watermark -->
  <div class="absolute right-[32px] bottom-[36px] flex items-start gap-[10px] drop-shadow-[0_2px_4px_rgba(0,0,0,0.5)]">
    <svg class="h-[56px] w-[45px]" viewBox="0 0 45 56"><path d="M0 0H18V7H8V33H18V55L12 41H0Z" fill="#8f3a8c" /><path d="M27 0H45V41H27V34H37V7H27Z" fill="#2474d8" /></svg>
    <span class="text-[62px] leading-[41px] font-semibold text-[#93a1e4]">XDA</span>
  </div>

  <script>
    const letters = 'ABCDEFGHIJKLMNOPQRSTU'.split('');
    const cols = document.getElementById('cols');
    const head = document.getElementById('head');
    const rows = document.getElementById('rows');

    letters.forEach(l => {
      cols.insertAdjacentHTML('beforeend', '<col class="w-[65px]">');
      head.insertAdjacentHTML('beforeend', l === 'F'
        ? `<th class="border-r border-b border-[#8a8a8a] bg-[#575757] p-0">${l}</th>`
        : `<th class="border-r border-b border-[#8a8a8a] p-0">${l}</th>`);
    });
    cols.insertAdjacentHTML('beforeend', '<col>');
    head.insertAdjacentHTML('beforeend', '<th class="border-b border-[#8a8a8a] p-0"></th>');

    for (let r = 1; r <= 40; r++) {
      const a = 2 * r - 1;
      const b = 1 + (r - 1) / 2;
      const values = { A: a, B: b, F: r <= 26 ? a * b + 3 : '' };
      const label = r === 1
        ? `<th class="border-r border-b border-[#8a8a8a] bg-[#575757] p-0 text-center font-['Inter',sans-serif] font-semibold text-white">${r}</th>`
        : `<th class="border-r border-b border-[#8a8a8a] bg-[#161616] p-0 text-center font-['Inter',sans-serif] font-semibold text-white">${r}</th>`;
      const cells = letters.map(l => `<td class="border-r border-b border-[#cfcfcf] p-0 pr-[2px]">${values[l] ?? ''}</td>`).join('');
      rows.insertAdjacentHTML('beforeend', `<tr class="h-4">${label}${cells}<td class="border-b border-[#cfcfcf] p-0"></td></tr>`);
    }
  </script>
</body>
</html>
